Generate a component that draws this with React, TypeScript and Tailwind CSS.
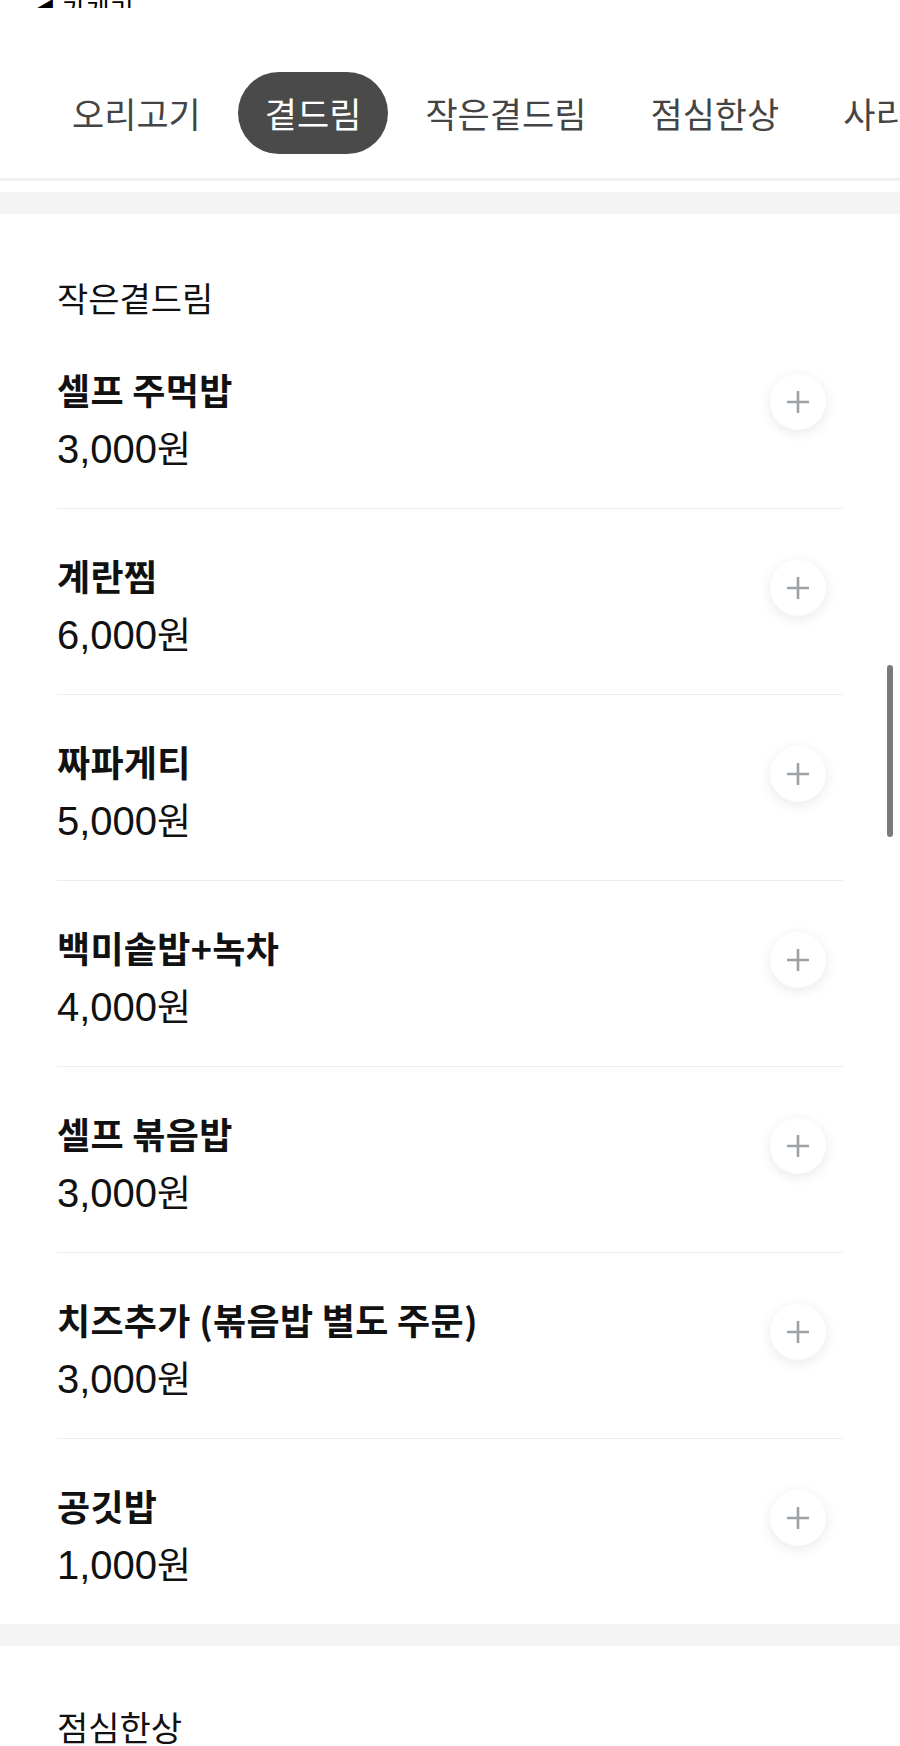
import React from 'react';

const tabs = ['오리고기', '곁드림', '작은곁드림', '점심한상', '사리'];

const items = [
  { name: '셀프 주먹밥', price: '3,000' },
  { name: '계란찜', price: '6,000' },
  { name: '짜파게티', price: '5,000' },
  { name: '백미솥밥+녹차', price: '4,000' },
  { name: '셀프 볶음밥', price: '3,000' },
  { name: '치즈추가 (볶음밥 별도 주문)', price: '3,000' },
  { name: '공깃밥', price: '1,000' },
];

const kr = "font-['Noto_Sans_CJK_KR',sans-serif]";

function PlusButton() {
  return (
    <button className="mt-[9px] mr-[17px] w-[56px] h-[56px] shrink-0 rounded-full bg-white flex items-center justify-center shadow-[0_3px_14px_rgba(0,0,0,0.09)]">
      <svg width="22" height="22" viewBox="0 0 22 22">
        <path d="M11 0v22M0 11h22" stroke="#9ca1a6" strokeWidth="2.6" />
      </svg>
    </button>
  );
}

function MenuItem({ name, price, last }: { name: string; price: string; last: boolean }) {
  return (
    <div className={`flex justify-between pt-[42px] pb-[36px] ${last ? '' : 'border-b border-[#ededed]'}`}>
      <div className="flex flex-col gap-[11px]">
        <div className={`${kr} h-[48px] text-[36px] leading-[48px] font-bold text-[#111] tracking-[0.3px]`}>{name}</div>
        <div className="h-[48px] flex items-center">
          <span className="font-['Liberation_Sans',sans-serif] text-[40px] leading-[40px] text-[#111] whitespace-nowrap">
            {price}
            <span className={`${kr} text-[37px]`}>원</span>
          </span>
        </div>
      </div>
      <PlusButton />
    </div>
  );
}

export default function App() {
  return (
    <div className={`relative w-[900px] h-[1746px] overflow-hidden bg-white ${kr}`}>
      {/* header with category tabs */}
      <div className="h-[178px] flex flex-col">
        <div className="h-[8px] overflow-hidden flex items-end pl-[30px]">
          <span className="text-[26px] leading-[26px] text-black whitespace-nowrap translate-y-[15px]">◀ 가게리</span>
        </div>
        <div className="mt-[64px] h-[82px] flex items-center gap-[10px] pl-[45px] whitespace-nowrap">
          {tabs.map((t, i) => (
            <div
              key={t}
              className={`h-[82px] px-[27px] shrink-0 rounded-full flex items-center text-[35px] ${
                i === 1 ? 'bg-[#4a4a4a] text-white' : 'text-[#444]'
              }`}
            >
              {t}
            </div>
          ))}
        </div>
      </div>
      <div className="h-[3px] bg-[#f1f1f1]" />
      <div className="h-[11px]" />
      <div className="h-[22px] bg-[#f4f4f4]" />

      <section className="px-[57px] pt-[62px]">
        <h2 className="text-[34px] leading-[44px] text-[#111] mb-[3px]">작은곁드림</h2>
        {items.map((it, i) => (
          <MenuItem key={it.name} name={it.name} price={it.price} last={i === items.length - 1} />
        ))}
      </section>

      <div className="h-[22px] bg-[#f4f4f4]" />

      <section className="px-[57px] pt-[59px]">
        <h2 className="text-[34px] leading-[44px] text-[#111]">점심한상</h2>
      </section>

      {/* scrollbar overlay */}
      <div className="absolute left-[887px] top-[665px] w-[6px] h-[172px] rounded-full bg-[#7a7a7a]" />
    </div>
  );
}
